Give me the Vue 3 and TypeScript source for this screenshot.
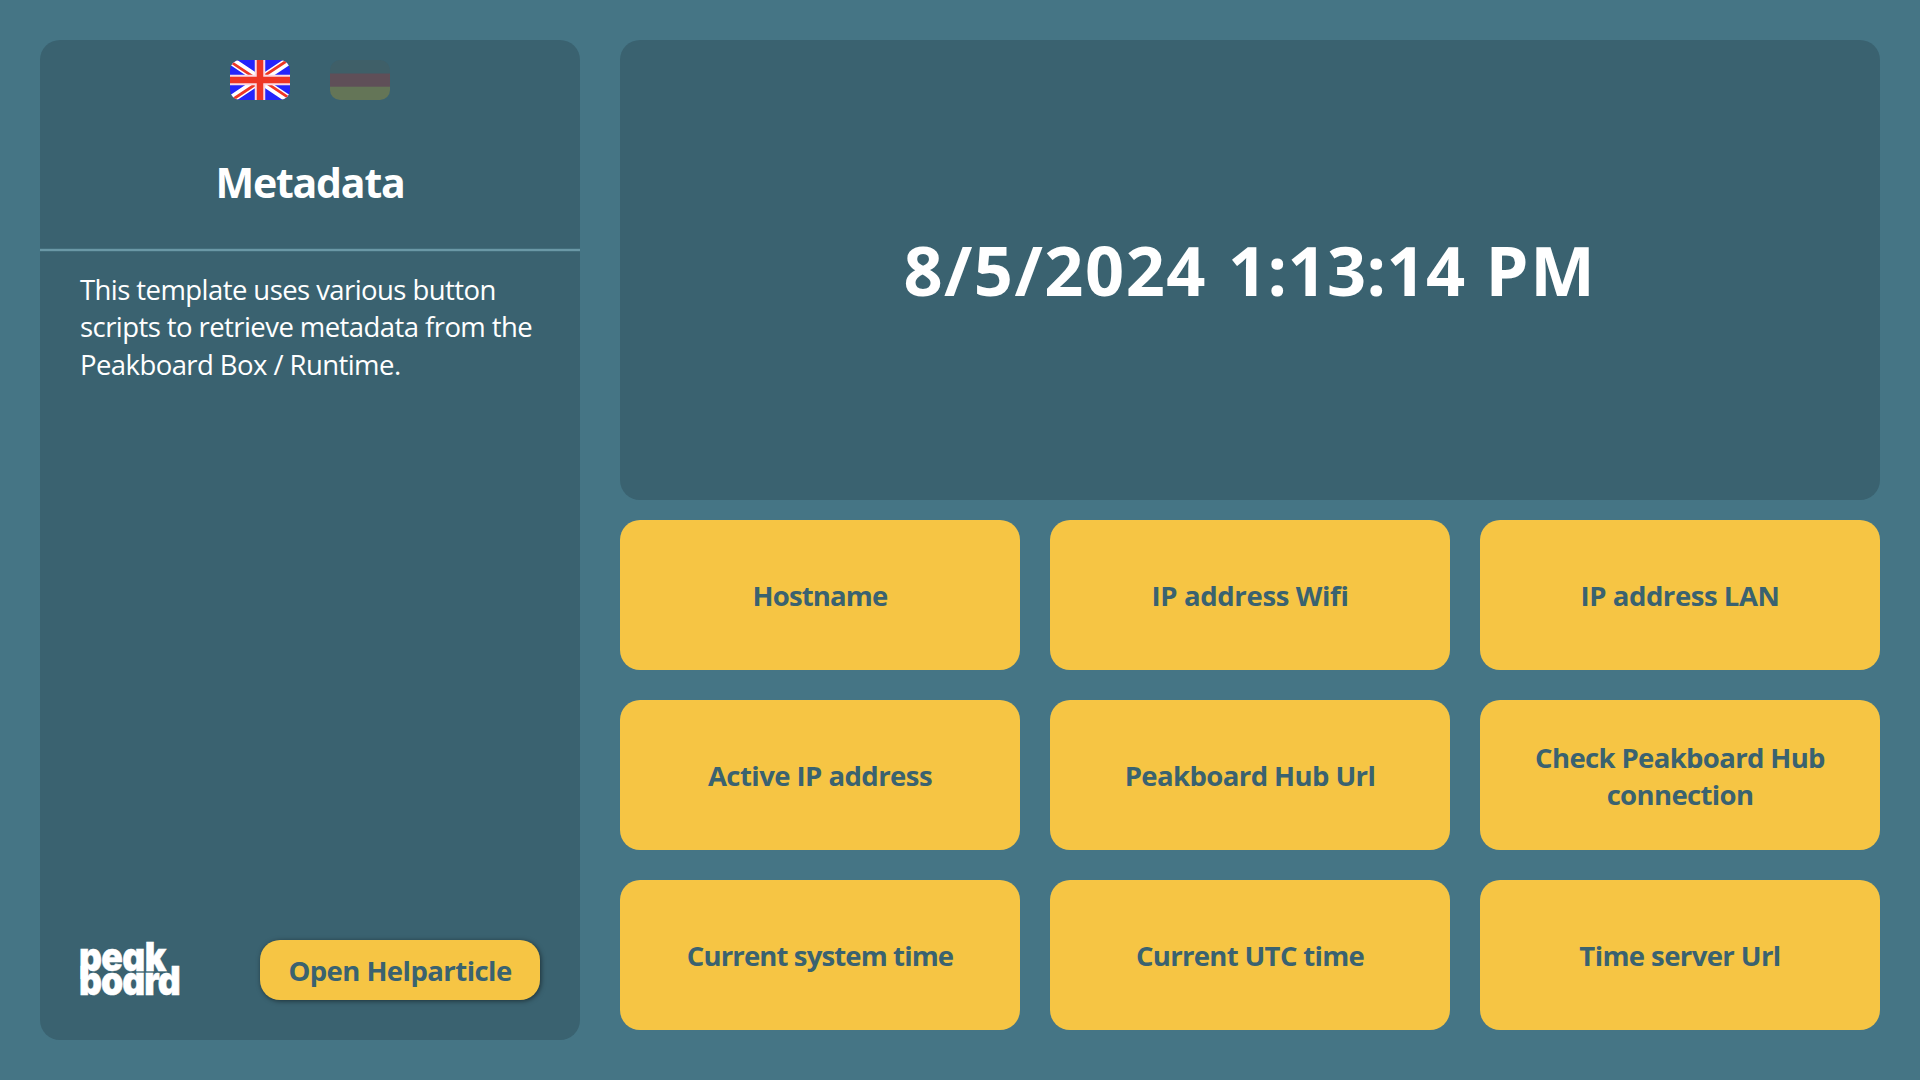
<script setup lang="ts">
interface Action { lines: string[]; spacing: number }

const actions: Action[] = [
  { lines: ['Hostname'], spacing: -0.85 },
  { lines: ['IP address Wifi'], spacing: -0.35 },
  { lines: ['IP address LAN'], spacing: -0.44 },
  { lines: ['Active IP address'], spacing: -0.55 },
  { lines: ['Peakboard Hub Url'], spacing: -0.58 },
  { lines: ['Check Peakboard Hub', 'connection'], spacing: -0.64 },
  { lines: ['Current system time'], spacing: -0.87 },
  { lines: ['Current UTC time'], spacing: -0.67 },
  { lines: ['Time server Url'], spacing: -0.6 },
]
const description: string[] = [
  'This template uses various button',
  'scripts to retrieve metadata from the',
  'Peakboard Box / Runtime.',
]
</script>

<template>
  <div class="page">
    <aside class="side">
      <div class="flags">
        <svg class="flag" viewBox="0 0 60 40">
          <rect width="60" height="40" fill="#2424fb" />
          <path d="M0 0L60 40M60 0L0 40" stroke="#fff" stroke-width="8" />
          <path d="M0 1.3L30 21.3M60 -1.3L30 18.7M0 41.3L30 21.3M60 38.7L30 18.7" stroke="#ee3524" stroke-width="2.8" />
          <path d="M30 0V40M0 20H60" stroke="#fbd9e2" stroke-width="10.5" />
          <path d="M30 0V40M0 20H60" stroke="#ee3524" stroke-width="6.5" />
        </svg>
        <svg class="flag off" viewBox="0 0 60 40">
          <rect width="60" height="14" fill="#3f5f68" />
          <rect y="13.5" width="60" height="13.5" fill="#5f4f58" />
          <rect y="26.7" width="60" height="13.3" fill="#647557" />
        </svg>
      </div>
      <h1>Metadata</h1>
      <div class="rule"></div>
      <p class="desc"><span v-for="l in description" :key="l">{{ l }}</span></p>
      <footer>
        <svg class="logo" viewBox="0 0 100 54">
          <g transform="scale(0.9 1)">
            <text x="-1.2" y="28" textLength="97" lengthAdjust="spacing">peak</text>
            <text x="-1.2" y="52.2" textLength="113" lengthAdjust="spacing">board</text>
          </g>
        </svg>
        <button class="help">Open Helparticle</button>
      </footer>
    </aside>
    <main>
      <section class="display"><span class="date">8/5/2024</span>&nbsp;<span class="time">1:13:14</span>&nbsp;<span class="half">PM</span></section>
      <div class="grid">
        <button v-for="a in actions" :key="a.lines[0]" class="action" :style="{ letterSpacing: a.spacing + 'px' }">
          <span v-for="l in a.lines" :key="l">{{ l }}</span>
        </button>
      </div>
    </main>
  </div>
</template>

<style>
body { margin: 0; background: #457585; }
</style>

<style scoped>
.page { width: 1920px; height: 1080px; box-sizing: border-box; padding: 40px; display: flex; gap: 40px; background: #457585; color: #fff; font-family: "Open Sans", "Noto Sans", sans-serif; }
button { border: 0; padding: 0; font: inherit; color: #3a6270; background: #f6c544; }
.side { width: 540px; height: 1000px; border-radius: 20px; background: #3a6270; display: flex; flex-direction: column; }
.flags { display: flex; justify-content: center; gap: 40px; padding-top: 20px; }
.flag { width: 60px; height: 40px; border-radius: 10px; display: block; }
h1 { margin: 42px 0 0; height: 80px; line-height: 80px; text-align: center; font-size: 41px; font-weight: 700; letter-spacing: -1.2px; }
.rule { margin-top: 26px; height: 2px; background: #6a98a6; border: solid #426d7b; border-width: 1px 0; }
.desc { margin: 19px 0 0 40px; font-size: 27.5px; line-height: 37.3px; letter-spacing: -0.57px; white-space: nowrap; }
.desc span { display: block; }
footer { margin: auto 40px 40px; display: flex; justify-content: space-between; align-items: center; }
.logo { width: 100px; height: 54px; display: block; overflow: visible; }
.logo text { font-family: Inter, sans-serif; font-weight: 900; font-size: 39.5px; font-feature-settings: "cv11"; fill: #fff; stroke: #fff; stroke-width: 0.5px; }
.help { width: 280px; height: 60px; border-radius: 20px; font-size: 27.5px; font-weight: 700; letter-spacing: -0.55px; box-shadow: 1px 1px 5px rgba(0, 0, 0, .5); }
main { width: 1260px; }
.display { box-sizing: border-box; height: 460px; padding-bottom: 1px; border-radius: 20px; background: #3a6270; text-align: center; line-height: 459px; font-size: 68.5px; font-weight: 700; letter-spacing: 1.15px; white-space: nowrap; }
.date { letter-spacing: 1.5px; }
.time { margin-left: 2px; letter-spacing: 0.4px; }
.half { margin-left: 1px; letter-spacing: 1.7px; }
.grid { margin-top: 20px; display: grid; grid-template-columns: repeat(3, 400px); grid-auto-rows: 150px; gap: 30px; }
.action { box-sizing: border-box; padding-top: 2px; border-radius: 20px; font-size: 27.5px; line-height: 37.3px; font-weight: 700; display: flex; flex-direction: column; align-items: center; justify-content: center; white-space: nowrap; }
</style>
